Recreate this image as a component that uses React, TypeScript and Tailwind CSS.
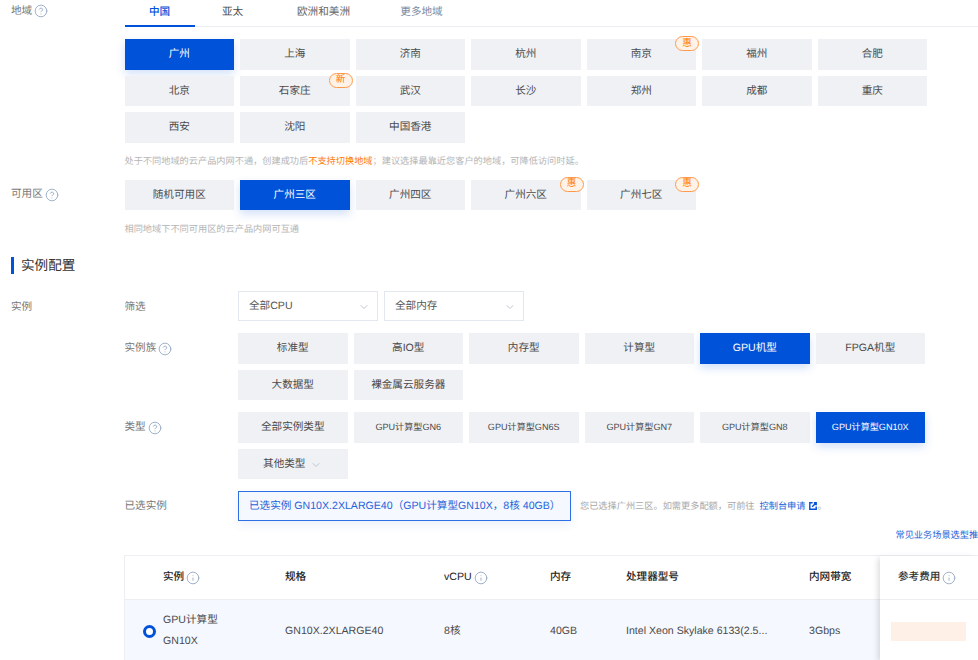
import { ChevronDown, CircleHelp, Info } from 'lucide-react';

const btnBase = 'relative flex h-[30.5px] w-[109.5px] items-center justify-center pt-[2px]';
const btnIdle = 'bg-[#f0f1f5] text-[#4a4a4a]';
const btnActive = 'bg-[#0052d9] text-white shadow-[0_4px_10px_rgba(0,82,217,0.18)]';

function Help() {
  return <CircleHelp className="ml-[2px] inline-block h-[14px] w-[14px] text-[#94a7c2]" strokeWidth={1.5} />;
}

function Tip() {
  return <Info className="ml-[2px] inline-block h-[14px] w-[14px] text-[#94a7c2]" strokeWidth={1.5} />;
}

function Opt({ label, active, badge, small }: { label: string; active?: boolean; badge?: string; small?: boolean }) {
  return (
    <div className={`${btnBase} ${active ? btnActive : btnIdle} ${small ? 'text-[9.1px]' : ''}`}>
      {label}
      {badge && (
        <span className="absolute right-[-3px] top-[-3px] flex h-[15px] w-[24px] items-center justify-center rounded-[8px] border border-[#ff9a4d] bg-[#fff3e8] text-[9.5px] leading-none text-[#ff7800]">
          {badge}
        </span>
      )}
    </div>
  );
}

const cols = [
  { w: 'w-[160px]', pl: 'pl-[38px]', head: '实例', tip: true },
  { w: 'w-[159px]', pl: '', head: '规格' },
  { w: 'w-[106px]', pl: '', head: 'vCPU', tip: true },
  { w: 'w-[76px]', pl: '', head: '内存' },
  { w: 'w-[183px]', pl: '', head: '处理器型号' },
  { w: 'w-[71px]', pl: '', head: '内网带宽' },
];

export default function App() {
  return (
    <div className="h-[660px] w-[978px] overflow-hidden bg-white text-[10.6px] text-[#4a4a4a] [font-family:'Liberation_Sans','Noto_Sans_CJK_SC',sans-serif] [text-rendering:geometricPrecision]">
      {/* 地域 */}
      <div className="flex pl-[11px]">
        <div className="flex w-[113.5px] shrink-0 items-start pt-[4px] text-[#777]">
          <span className="leading-[14px]">地域</span>
          <Help />
        </div>
        <div className="min-w-0 flex-1">
          <div className="flex h-[27px] gap-[3px] border-b border-[#eceef2] leading-[24px]">
            <div className="h-[27px] w-[70px] border-b-2 border-[#0052d9] text-center font-medium text-[#0052d9]">中国</div>
            <div className="w-[70px] text-center">亚太</div>
            <div className="w-[106px] text-center text-[#666]">欧洲和美洲</div>
            <div className="ml-[-4px] w-[92px] text-center text-[#7a8aa3]">更多地域</div>
          </div>
          <div className="mt-[12px] flex w-[810px] flex-wrap gap-x-[6px] gap-y-[6px]">
            <Opt label="广州" active />
            <Opt label="上海" />
            <Opt label="济南" />
            <Opt label="杭州" />
            <Opt label="南京" badge="惠" />
            <Opt label="福州" />
            <Opt label="合肥" />
            <Opt label="北京" />
            <Opt label="石家庄" badge="新" />
            <Opt label="武汉" />
            <Opt label="长沙" />
            <Opt label="郑州" />
            <Opt label="成都" />
            <Opt label="重庆" />
            <Opt label="西安" />
            <Opt label="沈阳" />
            <Opt label="中国香港" />
          </div>
          <p className="mt-[12px] h-[12px] text-[9.2px] leading-[12px] text-[#b5b5b5]">
            处于不同地域的云产品内网不通，创建成功后<span className="text-[#ff7800]">不支持切换地域</span>；建议选择最靠近您客户的地域，可降低访问时延。
          </p>
        </div>
      </div>

      {/* 可用区 */}
      <div className="mt-[13px] flex pl-[11px]">
        <div className="flex h-[30px] w-[113.5px] shrink-0 items-center text-[#777]">
          可用区
          <Help />
        </div>
        <div>
          <div className="flex gap-[6px]">
            <Opt label="随机可用区" />
            <Opt label="广州三区" active />
            <Opt label="广州四区" />
            <Opt label="广州六区" badge="惠" />
            <Opt label="广州七区" badge="惠" />
          </div>
          <p className="mt-[13px] text-[9.2px] leading-[12px] text-[#b5b5b5]">相同地域下不同可用区的云产品内网可互通</p>
        </div>
      </div>

      {/* 实例配置 */}
      <div className="mt-[22px] flex h-[17px] items-center pl-[11px]">
        <div className="h-[17px] w-[3px] bg-[#0052d9]" />
        <h2 className="ml-[7px] pt-[1px] text-[13.6px] text-[#333]">实例配置</h2>
      </div>

      <div className="mt-[17px] flex pl-[11px]">
        <div className="w-[113.5px] shrink-0 pt-[9px] leading-[14px] text-[#777]">实例</div>
        <div className="min-w-0 flex-1">
          <div className="flex">
            <div className="w-[113.5px] shrink-0 pt-[9px] leading-[14px] text-[#777]">筛选</div>
            <div className="flex gap-[6px]">
              {['全部CPU', '全部内存'].map((s) => (
                <div key={s} className="flex h-[30px] w-[140px] items-center justify-between border border-[#e3e8f0] pl-[10px] pr-[7px] pt-[2px] text-[#555]">
                  {s}
                  <ChevronDown className="h-[12px] w-[12px] text-[#a9b4c4]" strokeWidth={1.5} />
                </div>
              ))}
            </div>
          </div>

          <div className="mt-[12px] flex">
            <div className="flex h-[30px] w-[113.5px] shrink-0 items-center pt-[2px] text-[#777]">
              实例族
              <Help />
            </div>
            <div className="flex w-[700px] flex-wrap gap-[6px]">
              <Opt label="标准型" />
              <Opt label="高IO型" />
              <Opt label="内存型" />
              <Opt label="计算型" />
              <Opt label="GPU机型" active />
              <Opt label="FPGA机型" />
              <Opt label="大数据型" />
              <Opt label="裸金属云服务器" />
            </div>
          </div>

          <div className="mt-[12px] flex">
            <div className="flex h-[30px] w-[113.5px] shrink-0 items-center pt-[2px] text-[#777]">
              类型
              <Help />
            </div>
            <div className="flex w-[700px] flex-wrap gap-[6px]">
              <Opt label="全部实例类型" />
              <Opt label="GPU计算型GN6" small />
              <Opt label="GPU计算型GN6S" small />
              <Opt label="GPU计算型GN7" small />
              <Opt label="GPU计算型GN8" small />
              <Opt label="GPU计算型GN10X" small active />
              <div className={`${btnBase} ${btnIdle}`}>
                其他类型
                <ChevronDown className="ml-[5px] h-[12px] w-[12px] text-[#a9b4c4]" strokeWidth={1.5} />
              </div>
            </div>
          </div>

          <div className="mt-[12px] flex items-center">
            <div className="w-[113.5px] shrink-0 pt-[2px] text-[#777]">已选实例</div>
            <div className="flex h-[30px] w-[333px] shrink-0 items-center whitespace-nowrap border border-[#2f6fe4] bg-[#f5f8ff] pl-[10px] pt-[2px] text-[#1f63d8] shadow-[0_4px_10px_rgba(0,82,217,0.08)]">
              已选实例 GN10X.2XLARGE40（GPU计算型GN10X，8核 40GB）
            </div>
            <span className="ml-[9px] whitespace-nowrap pt-[1px] text-[9.2px] text-[#a8a8a8]">您已选择广州三区。如需更多配额，可前往</span>
            <span className="ml-[5px] flex items-center whitespace-nowrap pt-[1px] text-[9.2px] text-[#1f63d8]">
              控制台申请
              <svg viewBox="0 0 10 10" className="ml-[3px] h-[8px] w-[8px]" fill="none" stroke="#0052d9" strokeWidth="1.8">
                <path d="M4.5 1H1v8h8V5.5" />
                <path d="M4 6l5-5M6 1h3v3" />
              </svg>
              <span className="ml-[1px] text-[#a8a8a8]">。</span>
            </span>
          </div>

          <div className="ml-[771px] mt-[8px] h-[12px] whitespace-nowrap text-[9.2px] leading-[12px] text-[#1f63d8]">常见业务场景选型推荐</div>
        </div>
      </div>

      {/* 实例表格 */}
      <div className="ml-[124px] mt-[14px] flex border-l border-t border-[#eceef2]">
        <div className="flex w-[755px] shrink-0 flex-col">
          <div className="flex h-[44px] items-center border-b border-[#eceef2] pt-[1px] font-medium text-[#222]">
            {cols.map((c) => (
              <div key={c.head} className={`flex shrink-0 items-center ${c.w} ${c.pl}`}>
                {c.head}
                {c.tip && <Tip />}
              </div>
            ))}
          </div>
          <div className="flex h-[63px] items-center bg-[#f5f8ff] text-[#4a4a4a]">
            <div className="flex w-[160px] shrink-0 items-center pl-[18px]">
              <span className="h-[13px] w-[13px] rounded-full border-[3.5px] border-[#0052d9] bg-white" />
              <div className="ml-[7px] mt-[-2px] leading-[21px]">
                <div>GPU计算型</div>
                <div>GN10X</div>
              </div>
            </div>
            <div className="w-[159px] shrink-0">GN10X.2XLARGE40</div>
            <div className="w-[106px] shrink-0">8核</div>
            <div className="w-[76px] shrink-0">40GB</div>
            <div className="w-[183px] shrink-0">Intel Xeon Skylake 6133(2.5...</div>
            <div className="w-[71px] shrink-0">3Gbps</div>
          </div>
        </div>
        <div className="flex-1 bg-white shadow-[-4px_0_6px_-2px_rgba(0,0,0,0.14)]">
          <div className="flex h-[44px] items-center border-b border-[#eceef2] pl-[18px] pt-[1px] font-medium text-[#333]">
            参考费用
            <Tip />
          </div>
          <div className="ml-[11px] mt-[22px] h-[19px] w-[75px] bg-[#fef0e6]" />
        </div>
      </div>
    </div>
  );
}
